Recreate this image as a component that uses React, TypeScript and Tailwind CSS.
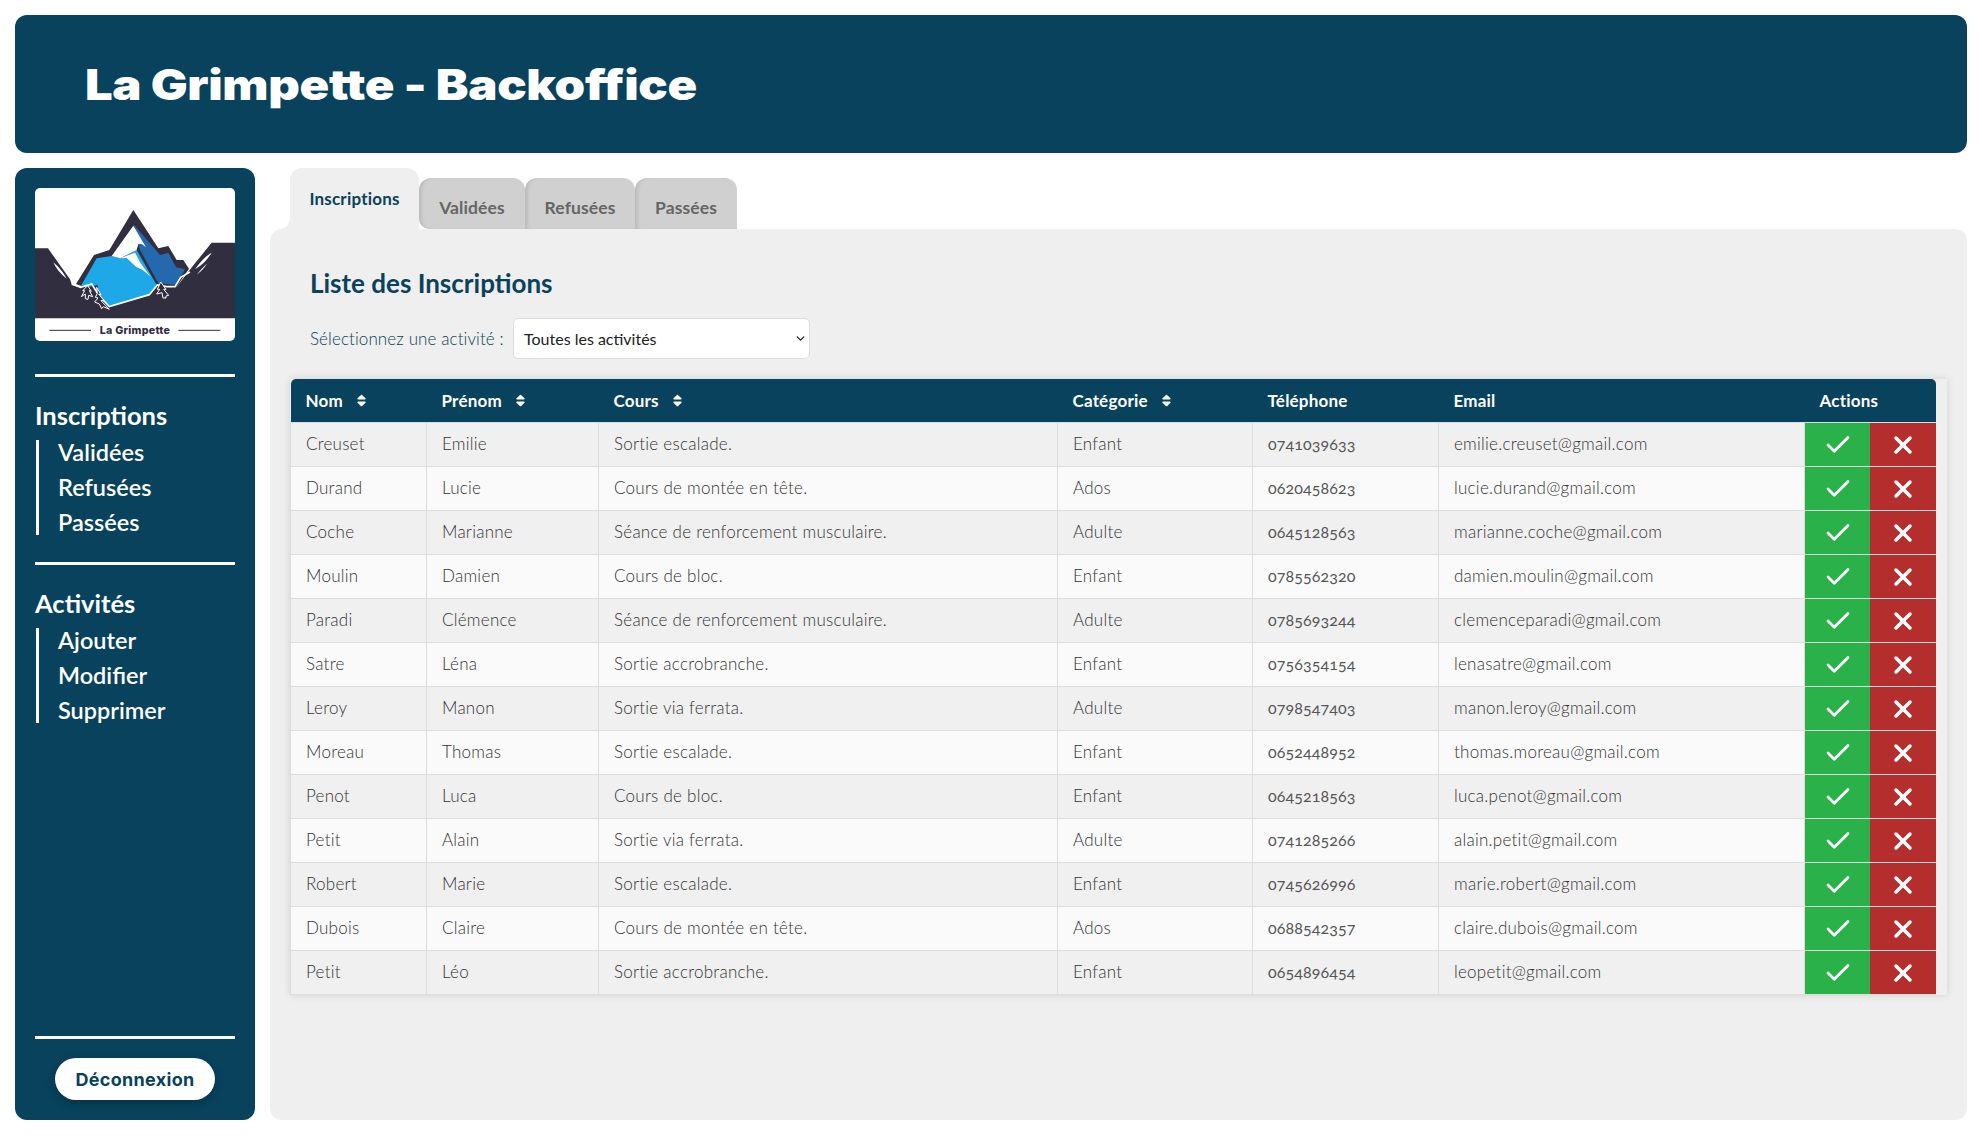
import { Check, X, ChevronDown } from "lucide-react";
import { FaSort } from "react-icons/fa";

const rows = [
  ["Creuset", "Emilie", "Sortie escalade.", "Enfant", "0741039633", "emilie.creuset@gmail.com"],
  ["Durand", "Lucie", "Cours de montée en tête.", "Ados", "0620458623", "lucie.durand@gmail.com"],
  ["Coche", "Marianne", "Séance de renforcement musculaire.", "Adulte", "0645128563", "marianne.coche@gmail.com"],
  ["Moulin", "Damien", "Cours de bloc.", "Enfant", "0785562320", "damien.moulin@gmail.com"],
  ["Paradi", "Clémence", "Séance de renforcement musculaire.", "Adulte", "0785693244", "clemenceparadi@gmail.com"],
  ["Satre", "Léna", "Sortie accrobranche.", "Enfant", "0756354154", "lenasatre@gmail.com"],
  ["Leroy", "Manon", "Sortie via ferrata.", "Adulte", "0798547403", "manon.leroy@gmail.com"],
  ["Moreau", "Thomas", "Sortie escalade.", "Enfant", "0652448952", "thomas.moreau@gmail.com"],
  ["Penot", "Luca", "Cours de bloc.", "Enfant", "0645218563", "luca.penot@gmail.com"],
  ["Petit", "Alain", "Sortie via ferrata.", "Adulte", "0741285266", "alain.petit@gmail.com"],
  ["Robert", "Marie", "Sortie escalade.", "Enfant", "0745626996", "marie.robert@gmail.com"],
  ["Dubois", "Claire", "Cours de montée en tête.", "Ados", "0688542357", "claire.dubois@gmail.com"],
  ["Petit", "Léo", "Sortie accrobranche.", "Enfant", "0654896454", "leopetit@gmail.com"],
];

function Logo() {
  return (
    <svg viewBox="45 54 600 459" className="block w-[200px] h-[153px] rounded-[5px] bg-white">
      <path fill="#312e3f" d="M45 235 L84 235 L150 328 L156 345 L180 352 L340 300 L470 350 L505 305 L525 280 L575 218 L645 218 L645 445 L45 445 Z" />
      <path fill="#fff" d="M100 277 Q125 298 140 326 Q112 305 100 277 Z M575 248 Q550 262 525 298 Q556 280 575 248 Z M562 280 Q545 296 530 314 Q548 302 562 280 Z" />
      <path fill="#312e3f" d="M340 120 L415 235 L445 228 L470 270 L490 270 L507 296 L470 350 L400 345 L265 420 L190 350 L168 342 L222 255 L268 240 Z" />
      <path fill="#2468ae" d="M340 162 L420 255 L445 248 L468 292 L495 298 L468 345 L415 340 L360 240 Z" />
      <path fill="#1fa8e8" d="M183 347 L230 265 L275 258 L300 265 L350 240 L410 345 L385 376 L268 410 L240 382 L232 345 L208 350 L196 352 Z" />
      <path fill="#fff" d="M340 167 L378 232 L365 222 L355 222 L350 240 L300 265 L275 258 Z" />
      <path fill="#fff" d="M300 265 L345 248 L362 280 L392 320 L368 300 L348 290 L320 264 Z" />
      <path fill="none" stroke="#fff" strokeWidth="5" d="M155 342 L182 352 L215 342 L238 378 L268 410 L388 374 L412 345 L440 350 L465 350 L482 322 L510 306" />
      <path fill="#312e3f" stroke="#fff" strokeWidth="3" d="M203 347 L214 364 L208 362 L218 380 L206 376 L204 388 L196 386 L196 372 L184 380 L194 362 L188 362 Z" />
      <path fill="#312e3f" stroke="#fff" strokeWidth="3" d="M230 352 L243 374 L236 372 L252 392 L243 392 L268 418 L250 410 L245 416 L238 402 L224 396 L234 384 L226 382 L232 370 Z" />
      <path fill="#312e3f" stroke="#fff" strokeWidth="3" d="M422 336 L438 358 L431 358 L446 376 L438 378 L438 384 L429 384 L426 368 L410 372 L419 358 L412 358 Z" />
      <path stroke="#312e3f" strokeWidth="3" d="M88 481 H213 M475 481 H601" />
      <text x="345" y="491" textAnchor="middle" fill="#312e3f" fontSize="32" fontWeight="800" letterSpacing="0.8" className="font-['Inter',sans-serif]">La Grimpette</text>
    </svg>
  );
}

function SideGroup({ title, items }: { title: string; items: string[] }) {
  return (
    <div className="h-[185px] pt-[23px]">
      <div className="text-[25.5px] leading-[30px] font-bold">{title}</div>
      <div className="mt-[10px] ml-px flex flex-col gap-[10px] border-l-[3px] border-white pl-[19px]">
        {items.map((i) => (
          <div key={i} className="text-[23.5px] leading-[25px] font-semibold">{i}</div>
        ))}
      </div>
    </div>
  );
}

function Head({ label, sort, className, span }: { label: string; sort?: boolean; className?: string; span?: number }) {
  return (
    <th colSpan={span} className={`p-0 pl-[15px] text-left text-[17px] font-bold tracking-[0.2px] text-white ${className ?? ""}`}>
      <span className="inline-flex items-center gap-[11px]">
        {label}
        {sort && <FaSort className="text-[15px]" />}
      </span>
    </th>
  );
}

export default function App() {
  return (
    <div className="flex h-[1137px] flex-col gap-[15px] bg-white p-[15px] pb-[17px] font-['Lato','Liberation_Sans',sans-serif]">
      <header className="flex h-[138px] shrink-0 items-center rounded-[12px] bg-[#08425c] pl-[70px]">
        <h1 className="origin-left scale-x-[1.167] text-[42px] font-black tracking-[-0.3px] text-white font-['Inter',sans-serif]">La Grimpette - Backoffice</h1>
      </header>
      <div className="flex min-h-0 flex-1 gap-[15px]">
        <aside className="flex w-[240px] shrink-0 flex-col rounded-[12px] bg-[#08425c] px-[20px] pt-[20px] pb-[20px] text-white">
          <Logo />
          <div className="mt-[33px] h-[3px] bg-white" />
          <SideGroup title="Inscriptions" items={["Validées", "Refusées", "Passées"]} />
          <div className="h-[3px] bg-white" />
          <SideGroup title="Activités" items={["Ajouter", "Modifier", "Supprimer"]} />
          <div className="mt-auto h-[3px] bg-white" />
          <button className="mx-auto mt-[19px] h-[42px] w-[160px] rounded-full bg-white text-[18px] font-bold tracking-[0.3px] text-[#08425c] shadow-[0_3px_8px_rgba(0,0,0,0.25)] font-['Inter',sans-serif]">Déconnexion</button>
        </aside>
        <main className="flex min-w-0 flex-1 flex-col">
          <div className="flex h-[61px] items-end pl-[20px]">
            <div className="relative flex h-[61px] w-[129px] justify-center rounded-t-[12px] bg-[#efefef] pt-[18px] text-[17px] font-bold tracking-[0.2px] text-[#08425c]">
              Inscriptions
              <span className="absolute bottom-0 -left-[10px] h-[10px] w-[10px] bg-[radial-gradient(circle_at_0_0,transparent_9.5px,#efefef_10px)]" />
            </div>
            {[["Validées", "w-[106px] rounded-bl-[10px]"], ["Refusées", "w-[110px]"], ["Passées", "w-[102px]"]].map(([t, w]) => (
              <div key={t} className={`flex h-[51px] ${w} justify-center rounded-t-[12px] bg-[#d0d0d0] pt-[17px] text-[17.5px] font-bold tracking-[0.1px] text-[#666] shadow-[inset_4px_0_4px_-2px_rgba(0,0,0,0.12)]`}>{t}</div>
            ))}
          </div>
          <section className="flex-1 rounded-[12px] bg-[#efefef] px-[20px] pt-[39px]">
            <h2 className="pl-[20px] text-[26px] leading-[30px] font-bold text-[#08425c]">Liste des Inscriptions</h2>
            <div className="mt-[20px] flex items-center pl-[20px]">
              <label className="w-[193px] text-[17px] font-light tracking-[0.1px] whitespace-nowrap text-[#08425c]">Sélectionnez une activité :</label>
              <div className="relative ml-[10px] h-[41px] w-[297px]">
                <select className="h-full w-full appearance-none rounded-[5px] border border-[#ddd] bg-white pl-[10px] text-[16px] text-[#222]">
                  <option>Toutes les activités</option>
                </select>
                <ChevronDown size={13} strokeWidth={2.5} className="pointer-events-none absolute top-[14px] right-[3px] text-[#222]" />
              </div>
            </div>
            <div className="mt-[20px] shadow-[0_0_8px_rgba(0,0,0,0.12)]">
              <table className="w-[1646px] table-fixed border-collapse text-[17px] text-[#333]">
                <thead>
                  <tr className="h-[43px] bg-[#08425c]">
                    <Head label="Nom" sort className="w-[136px] rounded-tl-[5px]" />
                    <Head label="Prénom" sort className="w-[172px]" />
                    <Head label="Cours" sort className="w-[459px]" />
                    <Head label="Catégorie" sort className="w-[195px]" />
                    <Head label="Téléphone" className="w-[186px]" />
                    <Head label="Email" className="w-[366px]" />
                    <Head label="Actions" span={2} className="rounded-tr-[5px]" />
                  </tr>
                </thead>
                <tbody>
                  {rows.map((r, i) => (
                    <tr key={i} className={`h-[44px] ${i % 2 === 0 ? "bg-[#f0f0f0]" : "bg-[#fafafa]"}`}>
                      {r.map((c, j) => (
                        <td key={j} className={`border border-[#ddd] p-0 pl-[15px] ${j === 4 ? "text-[16px] tracking-[0.1px] text-[#555] oldstyle-nums" : "font-light tracking-[0.25px]"}`}>{c}</td>
                      ))}
                      <td className="w-[65px] border-y border-[#ddd] bg-[#2bb14a] p-0 text-center text-white">
                        <Check size={30} strokeWidth={2.2} className="mx-auto mt-[1px]" />
                      </td>
                      <td className="w-[66px] border-y border-[#ddd] bg-[#b52e2e] p-0 text-center text-white">
                        <X size={28} strokeWidth={3} className="mx-auto mt-[1px]" />
                      </td>
                    </tr>
                  ))}
                </tbody>
              </table>
            </div>
          </section>
        </main>
      </div>
    </div>
  );
}
